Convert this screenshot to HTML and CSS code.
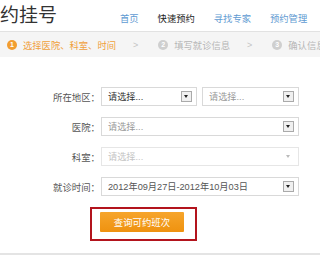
FILE: index.html
```html
<!DOCTYPE html>
<html lang="zh">
<head>
<meta charset="utf-8">
<link rel="stylesheet" href="styles.css">
</head>
<body>
<div class="page">
  <header class="top">
    <h1 class="title">约挂号</h1>
    <nav class="nav">
      <a class="nav-item">首页</a>
      <a class="nav-item nav-cur">快速预约</a>
      <a class="nav-item">寻找专家</a>
      <a class="nav-item">预约管理</a>
    </nav>
  </header>
  <div class="steps">
    <div class="step step-on"><span class="num">1</span><span class="step-txt">选择医院、科室、时间</span></div>
    <span class="sep">&gt;</span>
    <div class="step"><span class="num">2</span><span class="step-txt">填写就诊信息</span></div>
    <span class="sep">&gt;</span>
    <div class="step"><span class="num">3</span><span class="step-txt">确认信息</span></div>
  </div>
  <div class="form">
    <div class="row">
      <span class="label">所在地区<span class="colon">：</span></span>
      <div class="sel sel-half sel-dark"><span class="sel-txt">请选择...</span><span class="arrow"></span></div>
      <div class="sel sel-half2"><span class="sel-txt">请选择...</span><span class="arrow"></span></div>
    </div>
    <div class="row">
      <span class="label">医院<span class="colon">：</span></span>
      <div class="sel sel-full"><span class="sel-txt">请选择...</span><span class="arrow"></span></div>
    </div>
    <div class="row">
      <span class="label">科室<span class="colon">：</span></span>
      <div class="sel sel-full sel-off"><span class="sel-txt">请选择...</span><span class="arrow arrow-off"></span></div>
    </div>
    <div class="row">
      <span class="label">就诊时间<span class="colon">：</span></span>
      <div class="sel sel-full sel-date"><span class="sel-txt">2012年09月27日-2012年10月03日</span><span class="arrow"></span></div>
    </div>
    <div class="btn-row">
      <div class="mark">
        <button class="btn" type="button">查询可约班次</button>
      </div>
    </div>
  </div>
  <div class="foot-line"></div>
</div>
</body>
</html>
```

FILE: styles.css
```css
* { box-sizing: border-box; }
html, body { margin: 0; padding: 0; background: #fff; }
body {
  width: 320px;
  height: 256px;
  overflow: hidden;
  font-family: "Liberation Sans", "Noto Sans CJK SC", sans-serif;
  font-size: 9.4px;
  color: #444;
  white-space: nowrap;
}
.page { width: 320px; }

.top {
  height: 32px;
  border-bottom: 1px solid #e2e2e2;
  display: flex;
  align-items: flex-start;
}
.title {
  margin: 0;
  font-family: "Noto Sans CJK SC", sans-serif;
  font-weight: 400;
  font-size: 19px;
  line-height: 28px;
  color: #333;
  width: 120px;
  flex-shrink: 0;
}
.nav {
  display: flex;
  padding-top: 12px;
  flex-shrink: 0;
}
.nav-item {
  font-family: "Noto Sans CJK SC", sans-serif;
  font-size: 9.3px;
  line-height: 12px;
  color: #5f9bd2;
  margin-right: 19px;
  flex-shrink: 0;
}
.nav-cur { color: #222; }

.steps {
  height: 25px;
  background: #f5f5f5;
  display: flex;
  align-items: center;
  padding-left: 7px;
  font-family: "Noto Sans CJK SC", sans-serif;
}
.step { display: flex; align-items: center; color: #b5b5b5; flex-shrink: 0; }
.step-on { color: #f0a03c; }
.num {
  width: 10px;
  height: 10px;
  border-radius: 50%;
  background: #cfcfcf;
  color: #fff;
  font-family: "Liberation Sans", sans-serif;
  font-size: 7px;
  font-weight: bold;
  line-height: 10px;
  text-align: center;
  margin-right: 6px;
  flex-shrink: 0;
}
.step-on .num { background: #f29d30; }
.step-txt { font-size: 9.3px; line-height: 12px; }
.sep {
  color: #c4c4c4;
  font-family: "Liberation Sans", sans-serif;
  font-size: 9px;
  margin: 0 20px 0 17px;
  flex-shrink: 0;
}

.form {
  padding-top: 30px;
  display: flex;
  flex-direction: column;
  gap: 11px;
}
.row {
  display: flex;
  align-items: center;
  height: 19px;
}
.label {
  width: 101px;
  flex-shrink: 0;
  text-align: right;
  padding-right: 1px;
  font-family: "Noto Sans CJK SC", sans-serif;
  font-size: 9.4px;
  color: #555;
}
.colon { font-family: "Noto Sans CJK JP", sans-serif; }
.sel {
  height: 19px;
  border: 1px solid #d9d9d9;
  background: #fff;
  display: flex;
  align-items: center;
  justify-content: space-between;
  padding: 0 4px 0 6px;
  color: #999;
  flex-shrink: 0;
}
.sel-half { width: 96px; }
.sel-half2 { width: 97px; margin-left: 5px; }
.sel-full { width: 198px; }
.sel-dark { color: #333; }
.sel-date { color: #555; }
.sel-off { border-color: #e6e6e6; color: #c4c4c4; }
.sel-txt { font-size: 9.2px; line-height: 12px; }
.arrow {
  width: 11px;
  height: 11px;
  border: 1px solid #aaa;
  background: #f0f0f0;
  position: relative;
  flex-shrink: 0;
}
.arrow::after {
  content: "";
  position: absolute;
  left: 2px;
  top: 3px;
  border-left: 2.5px solid transparent;
  border-right: 2.5px solid transparent;
  border-top: 3px solid #222;
}
.arrow-off { border-color: transparent; background: transparent; }
.arrow-off::after { border-top-color: #bbb; }

.btn-row { display: flex; padding-left: 90px; }
.mark {
  width: 107px;
  height: 34px;
  border: 2px solid #b3141d;
  padding: 3px 0 0 8px;
}
.btn {
  width: 84px;
  height: 20px;
  border: 0;
  border-radius: 1px;
  background: linear-gradient(#f6a52c, #ef920f);
  color: #fff;
  font-family: "Noto Sans CJK SC", sans-serif;
  font-size: 9.4px;
  line-height: 20px;
  padding: 0;
}
.foot-line {
  margin-top: 12px;
  height: 2px;
  background: #e4e4e4;
}
```
